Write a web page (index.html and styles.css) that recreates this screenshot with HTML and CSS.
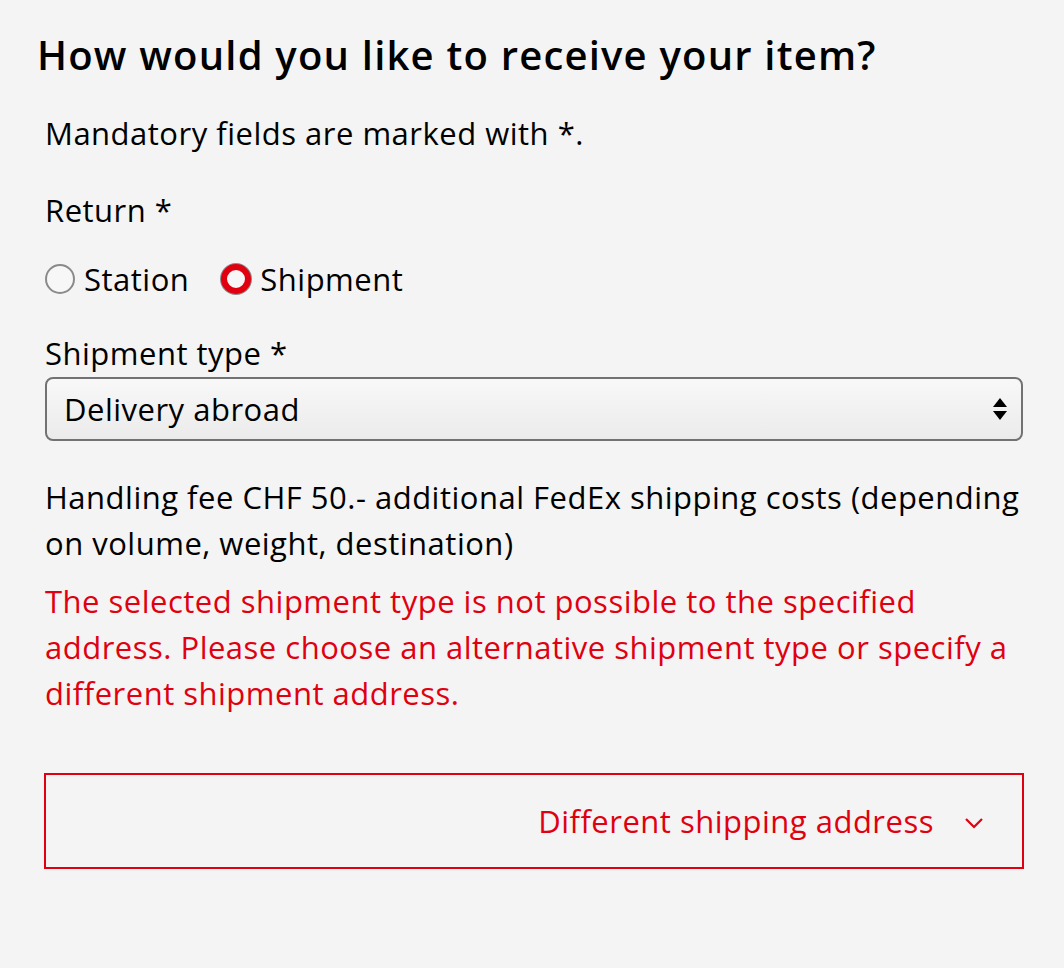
FILE: index.html
```html
<!DOCTYPE html>
<html lang="en">
<head>
    <meta charset="UTF-8">
    <meta name="viewport" content="width=device-width, initial-scale=1.0">
    <title>Receive your item</title>
    <link rel="stylesheet" href="styles.css">
</head>
<body>
    <div class="container">
        <h1>How would you like to receive your item?</h1>
        <p class="hint">Mandatory fields are marked with *.</p>

        <form id="deliveryForm">
            <div class="field-label">Return *</div>
            <div class="radio-row">
                <label class="radio">
                    <input type="radio" name="return" value="station">
                    Station
                </label>
                <label class="radio">
                    <input type="radio" name="return" value="shipment" checked>
                    Shipment
                </label>
            </div>

            <label class="field-label" for="shipmentType">Shipment type *</label>
            <div class="select-wrap">
                <select id="shipmentType" name="shipmentType">
                    <option value="abroad">Delivery abroad</option>
                    <option value="domestic">Delivery Switzerland</option>
                </select>
                <svg class="select-arrows" width="16" height="28" viewBox="0 0 16 28">
                    <path d="M8 3 L15 12 L1 12 Z" fill="#000"/>
                    <path d="M1 16 L15 16 L8 25 Z" fill="#000"/>
                </svg>
            </div>

            <p class="info">Handling fee CHF 50.- additional FedEx shipping costs (depending on volume, weight, destination)</p>
            <p class="error">The selected shipment type is not possible to the specified address. Please choose an alternative shipment type or specify a different shipment address.</p>

            <button type="button" class="toggle">
                Different shipping address
                <svg class="chevron" width="20" height="12" viewBox="0 0 20 12">
                    <path d="M2 2 L10 10 L18 2" fill="none" stroke="#e0000f" stroke-width="2.2"/>
                </svg>
            </button>
        </form>
    </div>
</body>
</html>
```

FILE: styles.css
```css
body {
    font-family: "Open Sans", Arial, sans-serif;
    margin: 0;
    background-color: #f4f4f4;
    color: #000;
}
.container {
    width: 978px;
    padding: 31px 0 0 45px;
}
h1 {
    font-size: 40px;
    font-weight: 600;
    letter-spacing: 1.2px;
    line-height: 48px;
    margin: 0 0 31px -8px;
}
.hint,
.info,
.error,
.field-label,
.radio {
    font-size: 31px;
    letter-spacing: 0.5px;
    line-height: 46px;
}
.hint {
    margin: 0 0 31px;
}
.field-label {
    display: block;
}
.radio-row {
    display: flex;
    gap: 32px;
    margin: 23px 0 28px;
}
.radio {
    display: flex;
    align-items: center;
    gap: 9px;
    cursor: pointer;
}
.radio input {
    appearance: none;
    width: 30px;
    height: 30px;
    margin: 0;
    border: 2px solid #8a8a8a;
    border-radius: 50%;
    background-color: #f7f7f7;
    box-sizing: border-box;
}
.radio input:checked {
    border: 6px solid #e0000f;
    box-shadow: 0 0 0 1px #8a8a8a;
}
.select-wrap {
    position: relative;
    margin-top: 1px;
}
select {
    appearance: none;
    width: 100%;
    height: 64px;
    padding: 0 60px 0 17px;
    font-family: inherit;
    font-size: 31px;
    letter-spacing: 0.5px;
    color: #000;
    border: 2px solid #727272;
    border-radius: 8px;
    background: linear-gradient(#f8f8f8, #ebebeb);
    box-sizing: border-box;
}
.select-arrows {
    position: absolute;
    right: 15px;
    top: 18px;
    pointer-events: none;
}
.info {
    margin: 33px 0 12px;
}
.error {
    color: #e0000f;
    margin: 0;
}
.toggle {
    display: flex;
    justify-content: flex-end;
    align-items: center;
    gap: 30px;
    width: 980px;
    height: 96px;
    margin: 57px 0 0 -1px;
    padding: 0 38px 0 0;
    font-family: inherit;
    font-size: 31px;
    letter-spacing: 0.5px;
    color: #e0000f;
    background: transparent;
    border: 2.5px solid #e0000f;
    cursor: pointer;
}
.chevron {
    margin-top: 4px;
}
```
